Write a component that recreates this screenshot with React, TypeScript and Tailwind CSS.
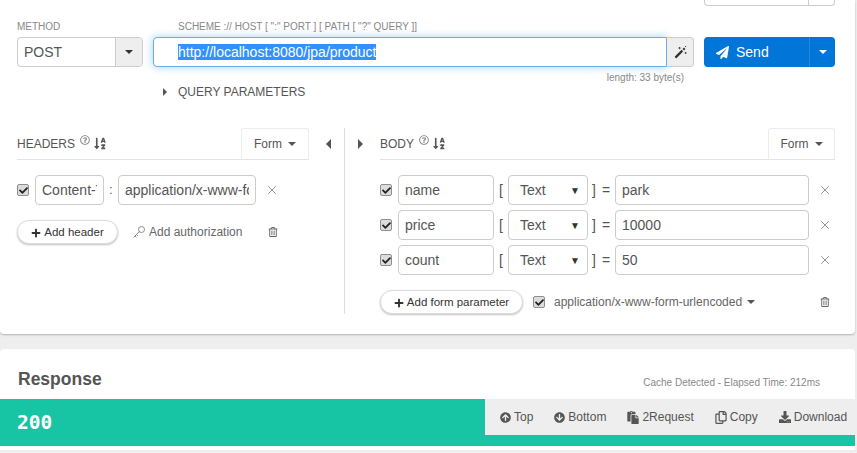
import type { ReactNode } from "react";
import {
  FaArrowCircleDown,
  FaArrowCircleUp,
  FaCheck,
  FaDownload,
  FaPaperPlane,
  FaPaste,
  FaPlus,
  FaRegCopy,
  FaRegQuestionCircle,
  FaRegTrashAlt,
  FaSortAlphaDown,
} from "react-icons/fa";
import { X } from "lucide-react";

const params = [
  { name: "name", value: "park" },
  { name: "price", value: "10000" },
  { name: "count", value: "50" },
];

const actions = [
  { label: "Top", icon: <FaArrowCircleUp className="w-[11px] h-[11px]" /> },
  { label: "Bottom", icon: <FaArrowCircleDown className="w-[11px] h-[11px]" /> },
  { label: "2Request", icon: <FaPaste className="w-[12px] h-[13px]" /> },
  { label: "Copy", icon: <FaRegCopy className="w-[12px] h-[13px]" /> },
  { label: "Download", icon: <FaDownload className="w-[12px] h-[12px]" /> },
];

function Check() {
  return (
    <span className="flex-shrink-0 w-3 h-3 rounded-[2px] border border-[#8f8f8f] bg-[#dcdcdc] flex items-center justify-center text-[#222]">
      <FaCheck className="w-[9px] h-[9px]" />
    </span>
  );
}

function Field({ value, className }: { value: string; className: string }) {
  return (
    <input
      readOnly
      value={value}
      className={`h-[30px] border border-[#ccc] rounded-[4px] px-[6px] text-[14px] text-[#555] bg-white outline-none ${className}`}
    />
  );
}

function Caret({ className = "" }: { className?: string }) {
  return <span className={`inline-block w-0 h-0 border-x-[4px] border-x-transparent border-t-[4px] border-t-current ${className}`} />;
}

function Wand() {
  return (
    <svg viewBox="0 0 14 14" className="w-[13px] h-[13px]">
      <path d="M1.5 12.5 9 5" stroke="#333" strokeWidth="2.4" />
      <path d="M10 4 11.5 2.5" stroke="#333" strokeWidth="2.4" />
      <path d="M6 1v2.4M4.8 2.2h2.4M12.5 6.5v2M11.5 7.5h2M12.5 0v1M12 .5h1" stroke="#333" strokeWidth="0.9" />
    </svg>
  );
}

function KeyIcon() {
  return (
    <svg viewBox="0 0 14 14" fill="none" stroke="#888" strokeWidth="1" className="w-[14px] h-[14px]">
      <circle cx="9.5" cy="4.5" r="3" />
      <path d="M7.3 6.7 1.5 12.5M3 11l1.5 1.5M4.5 9.5 6 11" />
    </svg>
  );
}

function SectionHead({ title, tabWidth }: { title: string; tabWidth: string }) {
  return (
    <div className="h-[32px] flex items-center justify-between border-b border-[#e3e3e3]">
      <div className="flex items-center text-[12px] text-[#555]">
        {title}
        <FaRegQuestionCircle className="w-[10px] h-[10px] ml-[5px] mb-[8px] text-[#888]" />
        <FaSortAlphaDown className="w-[12px] h-[13px] ml-[4px] text-[#555]" />
      </div>
      <div className={`h-[32px] -mb-px ${tabWidth} border border-[#ececec] border-b-[#e3e3e3] rounded-t-[3px] bg-white flex items-center justify-center gap-[6px] text-[12px] text-[#555]`}>
        Form <Caret />
      </div>
    </div>
  );
}

function Pill({ label, className }: { label: string; className: string }) {
  return (
    <div className={`h-[24px] pt-[1px] rounded-full border border-[#ddd] shadow-[0_1px_2px_rgba(0,0,0,0.25)] bg-white flex items-center justify-center gap-[3px] text-[11.5px] text-[#333] ${className}`}>
      <FaPlus className="w-[10px] h-[10px]" />
      {label}
    </div>
  );
}

function Remove({ className }: { className: string }) {
  return <X size={14} strokeWidth={1.2} className={`text-[#666] ${className}`} />;
}

export default function App(): ReactNode {
  return (
    <div className="w-[857px] h-[453px] overflow-hidden bg-[#eeeeee] font-['Liberation_Sans',Arial,sans-serif]">
      {/* Request card */}
      <div className="w-[855px] h-[334px] bg-white rounded-b-[4px] shadow-[0_1px_2px_rgba(0,0,0,0.25)] pr-[20px] pl-[17px]">
        <div className="flex justify-end h-[21px]">
          <div className="w-[131px] h-[6px] border-x border-b border-[#ccc] rounded-b-[4px] flex justify-end">
            <div className="w-[26px] border-l border-[#ccc]" />
          </div>
        </div>

        {/* Method and URL */}
        <div className="flex">
          <div className="w-[126px] mr-[10px]">
            <div className="h-[16px] text-[10px] leading-[11px] text-[#888]">METHOD</div>
            <div className="h-[30px] flex border border-[#ccc] rounded-[4px] text-[14px] text-[#555]">
              <div className="flex-1 px-[6px] flex items-center">POST</div>
              <div className="w-[27px] bg-[#eeeeee] border-l border-[#ccc] rounded-r-[3px] flex items-center justify-center text-[#333]">
                <Caret />
              </div>
            </div>
          </div>
          <div className="w-[541px] mr-[10px]">
            <div className="h-[16px] pl-[25px] text-[10px] leading-[11px] text-[#888]">SCHEME :// HOST [ ":" PORT ] [ PATH [ "?" QUERY ]]</div>
            <div className="h-[30px] flex">
              <div className="w-[514px] border border-[#66afe9] rounded-l-[4px] bg-white shadow-[0_0_8px_rgba(102,175,233,0.6)] pl-[24px] flex items-center text-[14px]">
                <span className="bg-[#3390ff] text-white leading-[16px]">http://localhost:8080/jpa/product</span>
              </div>
              <div className="flex-1 bg-[#eeeeee] border border-l-0 border-[#ccc] rounded-r-[4px] flex items-center justify-center">
                <Wand />
              </div>
            </div>
            <div className="mt-[6px] pr-[10px] text-right text-[10px] leading-[10px] text-[#888]">length: 33 byte(s)</div>
          </div>
          <div className="pt-[16px]">
            <div className="w-[131px] h-[30px] flex rounded-[4px] bg-[#0275d8] text-white">
              <div className="w-[106px] flex items-center pl-[12px] gap-[7px] text-[14px] border-r border-[#2a87da]">
                <FaPaperPlane className="w-[13px] h-[13px]" />
                Send
              </div>
              <div className="flex-1 flex items-center justify-center">
                <Caret />
              </div>
            </div>
          </div>
        </div>

        <div className="mt-[2px] pl-[146px] flex items-center gap-[11px] text-[12px] leading-[14px] text-[#555]">
          <span className="w-0 h-0 border-y-[4px] border-y-transparent border-l-[4px] border-l-[#555]" />
          QUERY PARAMETERS
        </div>

        {/* Headers and body */}
        <div className="flex mt-[29px] h-[186px]">
          <div className="w-[292px]">
            <SectionHead title="HEADERS" tabWidth="w-[68px]" />
            <div className="flex items-center mt-[15px]">
              <Check />
              <Field value="Content-Type" className="w-[69px] ml-[6px]" />
              <span className="w-[14px] text-center text-[12px] text-[#555]">:</span>
              <Field value="application/x-www-form-urlencoded" className="w-[138px]" />
              <Remove className="ml-[9px]" />
            </div>
            <div className="flex items-center mt-[15px]">
              <Pill label="Add header" className="w-[101px]" />
              <span className="ml-[14px] flex"><KeyIcon /></span>
              <span className="ml-[3px] text-[12px] text-[#666]">Add authorization</span>
              <FaRegTrashAlt className="w-[10px] h-[10px] ml-[26px] text-[#666]" />
            </div>
          </div>
          <div className="w-[35px] pt-[11px]">
            <span className="block ml-[17px] w-0 h-0 border-y-[5px] border-y-transparent border-r-[5px] border-r-[#555]" />
          </div>
          <div className="w-[36px] border-l border-[#ddd] pt-[11px]">
            <span className="block ml-[13px] w-0 h-0 border-y-[5px] border-y-transparent border-l-[5px] border-l-[#555]" />
          </div>
          <div className="w-[455px]">
            <SectionHead title="BODY" tabWidth="w-[67px]" />
            <div className="flex flex-col gap-[5px] mt-[15px]">
              {params.map((p) => (
                <div key={p.name} className="flex items-center text-[14px] text-[#555]">
                  <Check />
                  <Field value={p.name} className="w-[96px] ml-[6px]" />
                  <span className="w-[14px] text-center">[</span>
                  <div className="w-[80px] h-[30px] border border-[#ccc] rounded-[4px] flex items-center justify-between pl-[11px] pr-[7px]">
                    Text
                    <span className="text-[10px] text-[#333]">▼</span>
                  </div>
                  <span className="w-[12px] text-center">]</span>
                  <span className="w-[15px] pr-[3px] text-center">=</span>
                  <Field value={p.value} className="w-[194px]" />
                  <Remove className="ml-[9px] -mt-[1px]" />
                </div>
              ))}
            </div>
            <div className="flex items-center mt-[15px]">
              <Pill label="Add form parameter" className="w-[143px]" />
              <span className="ml-[10px] flex"><Check /></span>
              <span className="ml-[9px] text-[12px] text-[#666]">application/x-www-form-urlencoded</span>
              <Caret className="ml-[5px] text-[#555]" />
              <FaRegTrashAlt className="w-[10px] h-[10px] ml-[65px] text-[#666]" />
            </div>
          </div>
        </div>
      </div>

      {/* Response card */}
      <div className="w-[855px] h-[101px] mt-[15px] bg-white rounded-t-[4px]">
        <div className="h-[50px] flex items-center justify-between pl-[18px] pr-[35px] pt-[11px]">
          <span className="text-[17.5px] font-bold text-[#555]">Response</span>
          <span className="text-[10px] text-[#888] mt-[5px]">Cache Detected - Elapsed Time: 212ms</span>
        </div>
        <div className="h-[47px] bg-[#17c5a4] flex justify-between">
          <span className="pl-[17px] pt-[12px] text-[19.5px] leading-[24px] font-bold text-white font-['DejaVu_Sans_Mono',monospace]">200</span>
          <div className="w-[370px] h-[36px] bg-[#eeeeee] flex items-center pl-[15px] gap-[21px] text-[12px] text-[#555]">
            {actions.map((a) => (
              <span key={a.label} className="flex items-center gap-[3px]">
                {a.icon}
                {a.label}
              </span>
            ))}
          </div>
        </div>
      </div>
    </div>
  );
}
